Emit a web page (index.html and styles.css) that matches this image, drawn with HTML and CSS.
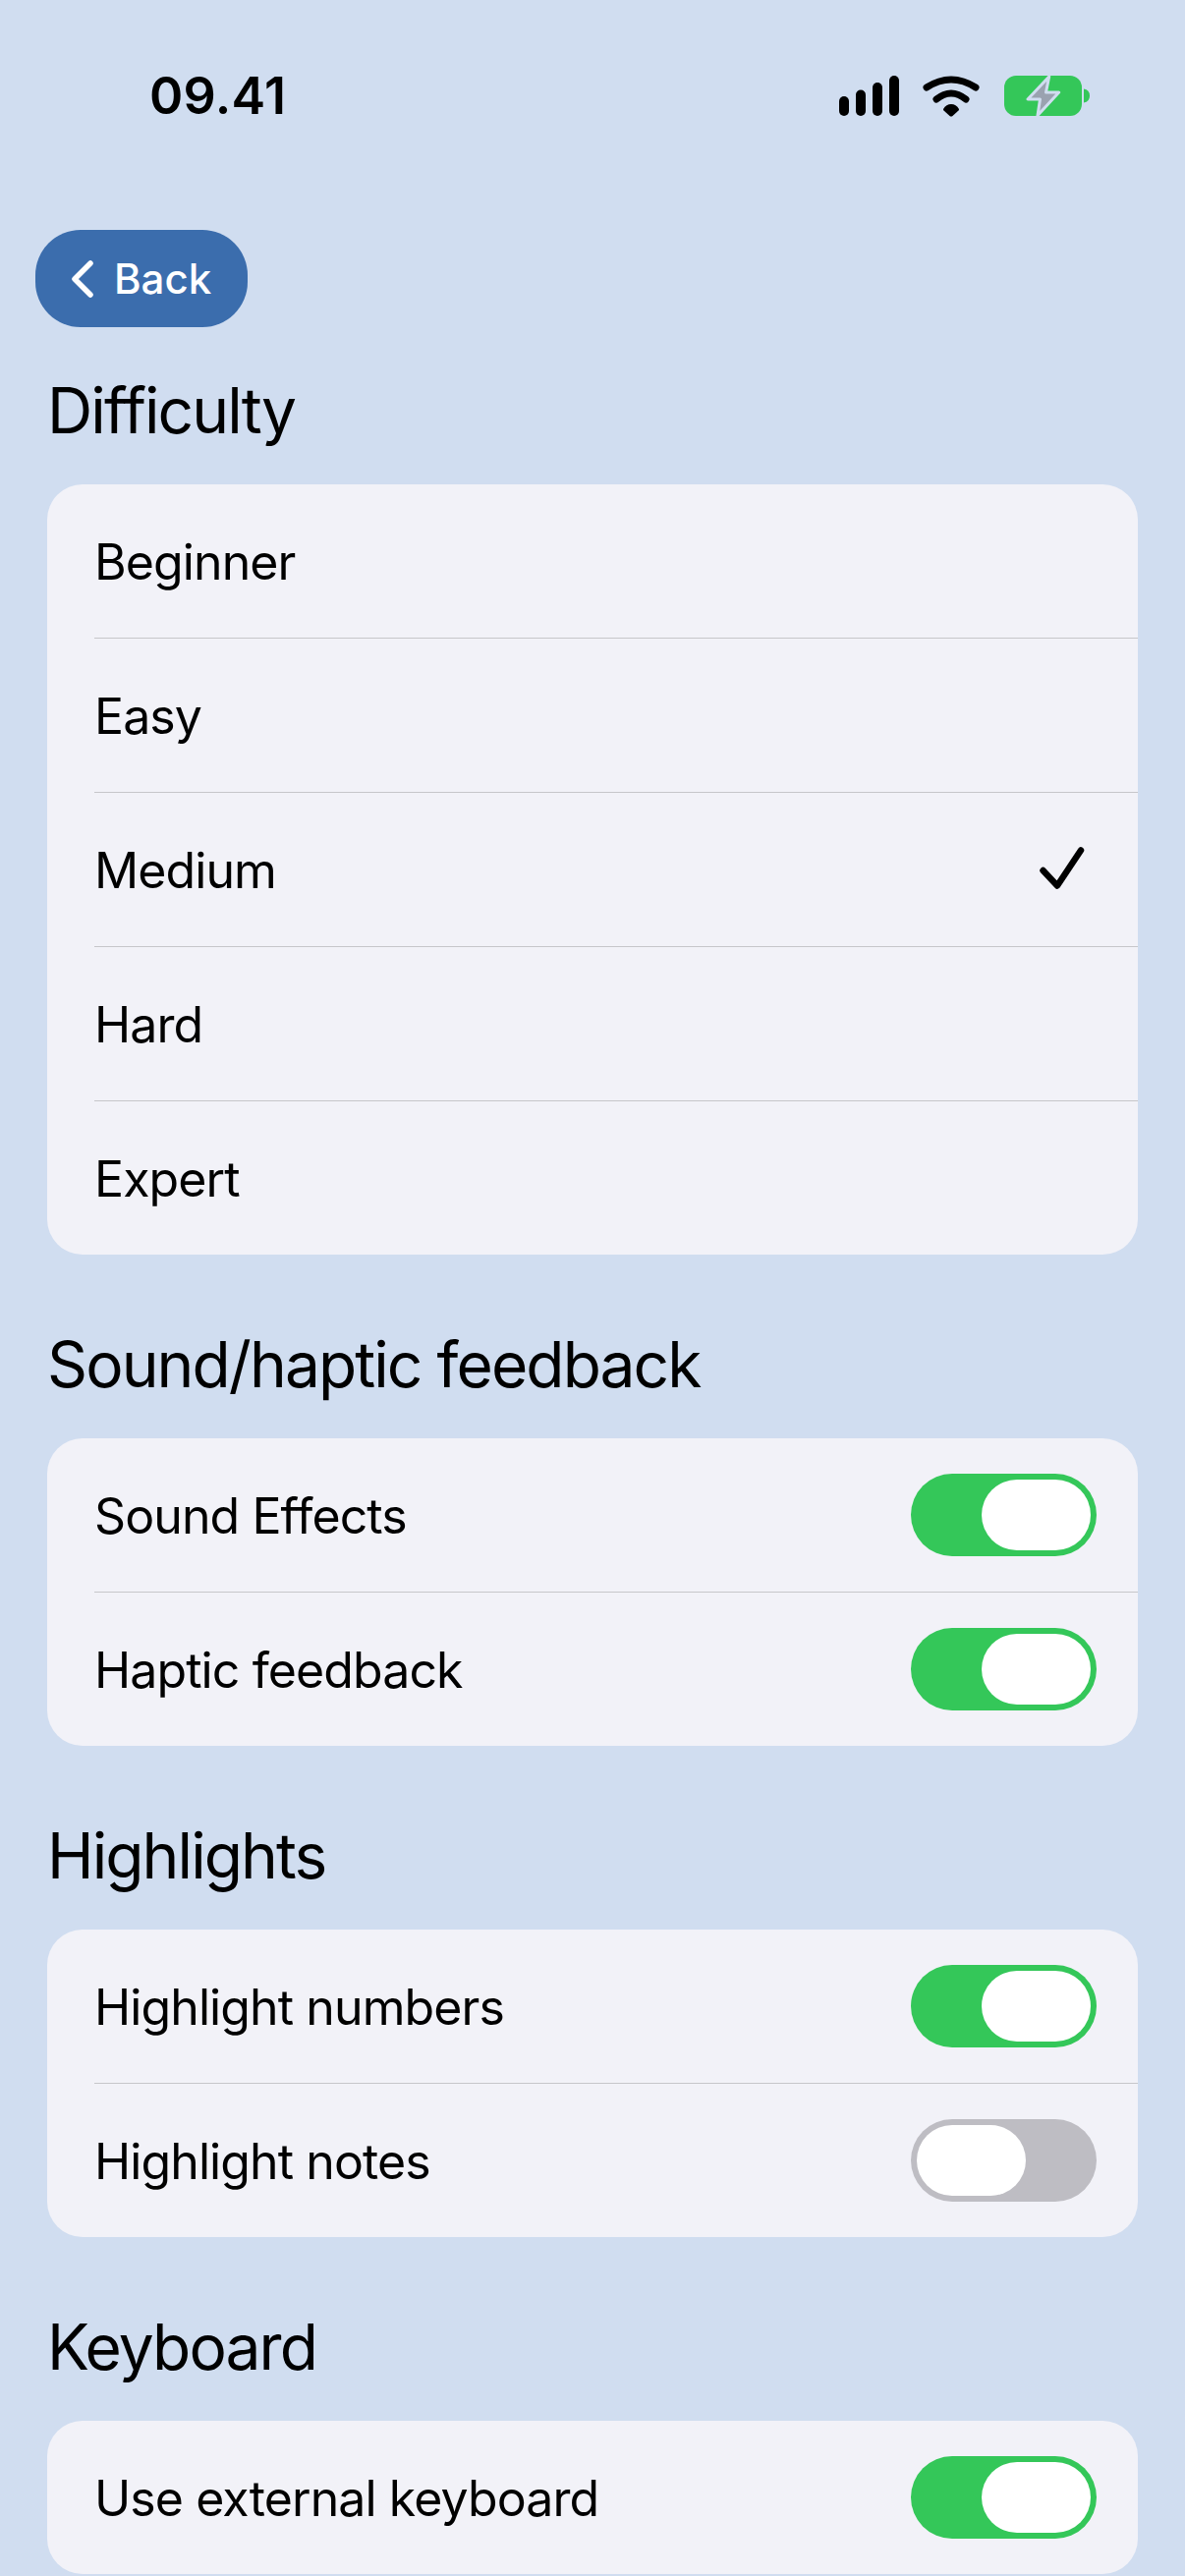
FILE: index.html
```html
<!DOCTYPE html>
<html lang="en">
<head>
    <meta charset="UTF-8">
    <meta name="viewport" content="width=device-width, initial-scale=1.0">
    <title>Settings</title>
    <link rel="stylesheet" href="styles.css">
</head>
<body>
    <div class="status-bar">
        <span class="time">09.41</span>
        <div class="status-icons">
            <svg class="signal" width="61" height="41" viewBox="0 0 61 41">
                <rect x="0" y="21" width="10" height="20" rx="5"/>
                <rect x="17" y="14.500" width="10" height="26.500" rx="5"/>
                <rect x="34" y="7" width="10" height="34" rx="5"/>
                <rect x="51" y="0" width="10" height="41" rx="5"/>
            </svg>
            <svg class="wifi" width="58" height="43" viewBox="0 0 58 43">
                <path d="M4 13Q29 -3 54 13" fill="none" stroke="#000" stroke-width="7" stroke-linecap="round"/>
                <path d="M14 25Q29 13 44 25" fill="none" stroke="#000" stroke-width="7" stroke-linecap="round"/>
                <path d="M29 30Q34 30 37 35Q37 36 36.500 36.500L30.500 42Q29 43 27.500 42L21.500 36.500Q21 36 21 35Q24 30 29 30Z"/>
            </svg>
            <svg class="battery" width="87" height="41" viewBox="0 0 87 41">
                <rect x="0" y="0" width="79" height="41" rx="12" fill="#34c759"/>
                <path d="M81 13.500Q87 14.500 87 20.500Q87 26.500 81 27.500Z" fill="#34c759"/>
                <path d="M45.700 1L24 24H36.500L34 40.500L55.700 17H42.500Z" fill="#9aa2b0" stroke="#d0ddf0" stroke-width="3" stroke-linejoin="round"/>
            </svg>
        </div>
    </div>

    <button class="back-button">
        <svg width="24" height="38" viewBox="0 0 24 38"><path d="M20 3L4 19L20 35" fill="none" stroke="#fff" stroke-width="5.500" stroke-linecap="round" stroke-linejoin="round"/></svg>
        Back
    </button>

    <h2 class="section-title first">Difficulty</h2>
    <div class="card">
        <div class="row"><span>Beginner</span></div>
        <div class="row"><span>Easy</span></div>
        <div class="row">
            <span>Medium</span>
            <svg class="check" width="46" height="46" viewBox="0 0 46 46"><path d="M3.500 24L18 39.500L42 3.500" fill="none" stroke="#000" stroke-width="6.500" stroke-linecap="round" stroke-linejoin="round"/></svg>
        </div>
        <div class="row"><span>Hard</span></div>
        <div class="row"><span>Expert</span></div>
    </div>

    <h2 class="section-title">Sound/haptic feedback</h2>
    <div class="card">
        <div class="row"><span>Sound Effects</span><div class="toggle on"><div class="knob"></div></div></div>
        <div class="row"><span>Haptic feedback</span><div class="toggle on"><div class="knob"></div></div></div>
    </div>

    <h2 class="section-title">Highlights</h2>
    <div class="card">
        <div class="row"><span>Highlight numbers</span><div class="toggle on"><div class="knob"></div></div></div>
        <div class="row"><span>Highlight notes</span><div class="toggle"><div class="knob"></div></div></div>
    </div>

    <h2 class="section-title">Keyboard</h2>
    <div class="card">
        <div class="row"><span>Use external keyboard</span><div class="toggle on"><div class="knob"></div></div></div>
    </div>
</body>
</html>
```

FILE: styles.css
```css
body {
    margin: 0;
    height: 2622px;
    overflow: hidden;
    background: #d0ddf0;
    color: #000;
    font-family: Inter, "Liberation Sans", sans-serif;
}

.status-bar {
    display: flex;
    align-items: center;
    justify-content: space-between;
    height: 70px;
    padding: 62px 97px 62px 152px;
}

.time {
    font-size: 52px;
    font-weight: 600;
    letter-spacing: 0.3px;
}

.status-icons {
    display: flex;
    align-items: center;
    gap: 24px;
}

.wifi {
    margin-right: 1px;
}

.back-button {
    display: flex;
    align-items: center;
    gap: 20px;
    width: 216px;
    height: 99px;
    margin: 40px 0 0 36px;
    padding: 0 0 0 36px;
    border: none;
    border-radius: 46px;
    background: #3b6dad;
    color: #fff;
    font-family: inherit;
    font-size: 42px;
    font-weight: 500;
}

.section-title {
    margin: 0;
    padding: 0 0 37px 48px;
    height: 187px;
    box-sizing: border-box;
    display: flex;
    align-items: flex-end;
    font-size: 64px;
    font-weight: 400;
    letter-spacing: -1.9px;
}

.section-title.first {
    height: 160px;
}

.card {
    margin: 0 48px;
    border-radius: 36px;
    background: #f2f2f8;
    overflow: hidden;
}

.row {
    display: flex;
    align-items: center;
    justify-content: space-between;
    height: 156px;
    margin-left: 48px;
    padding-right: 42px;
    border-bottom: 1px solid #c6c6ca;
    font-size: 50px;
    letter-spacing: -0.9px;
}

.row span {
    padding-top: 2px;
}

.row:last-child {
    border-bottom: none;
}

.check {
    margin-right: 12px;
}

.toggle {
    display: flex;
    justify-content: flex-start;
    width: 189px;
    height: 84px;
    padding: 6px;
    box-sizing: border-box;
    border-radius: 42px;
    background: #bebdc3;
}

.toggle.on {
    justify-content: flex-end;
    background: #34c759;
}

.knob {
    width: 111px;
    height: 72px;
    border-radius: 36px;
    background: #fff;
}
```
